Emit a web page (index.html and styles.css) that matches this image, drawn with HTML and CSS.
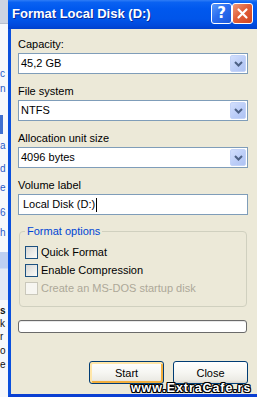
FILE: index.html
```html
<!DOCTYPE html>
<html>
<head>
<meta charset="utf-8">
<title>Format Local Disk (D:)</title>
<link rel="stylesheet" href="styles.css">
</head>
<body>
<div class="screen">
  <div class="backdrop">
    <div class="bd-top"></div>
    <span class="frag blue f1">c</span>
    <span class="frag blue f2">n</span>
    <div class="bd-sel"></div>
    <span class="frag blue f3">a</span>
    <span class="frag blue f4">d</span>
    <span class="frag blue f5">e</span>
    <span class="frag blue f6">6</span>
    <span class="frag blue f7">h</span>
    <div class="bd-band"></div>
    <span class="frag bold f8">s</span>
    <span class="frag f9">k</span>
    <span class="frag f10">r</span>
    <span class="frag f11">o</span>
    <span class="frag f12">e</span>
  </div>

  <div class="window">
    <div class="titlebar">
      <span class="title">Format Local Disk (D:)</span>
      <div class="caption-buttons">
        <div class="cbtn help">?</div>
        <div class="cbtn close">
          <svg width="13" height="13" viewBox="0 0 13 13"><path d="M2.5 2.5 L10.5 10.5 M10.5 2.5 L2.5 10.5" stroke="#fff" stroke-width="2.2" stroke-linecap="round"/></svg>
        </div>
      </div>
    </div>

    <div class="client">
      <div class="field">
        <div class="label">Capacity:</div>
        <div class="combo"><span class="value">45,2 GB</span><span class="drop"><svg width="9" height="6" viewBox="0 0 9 6"><path d="M1 1 L4.5 4.5 L8 1" fill="none" stroke="#4D6185" stroke-width="2"/></svg></span></div>
      </div>
      <div class="field">
        <div class="label">File system</div>
        <div class="combo"><span class="value">NTFS</span><span class="drop"><svg width="9" height="6" viewBox="0 0 9 6"><path d="M1 1 L4.5 4.5 L8 1" fill="none" stroke="#4D6185" stroke-width="2"/></svg></span></div>
      </div>
      <div class="field">
        <div class="label">Allocation unit size</div>
        <div class="combo"><span class="value">4096 bytes</span><span class="drop"><svg width="9" height="6" viewBox="0 0 9 6"><path d="M1 1 L4.5 4.5 L8 1" fill="none" stroke="#4D6185" stroke-width="2"/></svg></span></div>
      </div>
      <div class="field">
        <div class="label">Volume label</div>
        <div class="textbox"><span>Local Disk (D:)</span><span class="caret"></span></div>
      </div>

      <fieldset class="group">
        <legend>Format options</legend>
        <div class="check"><span class="box"></span><span>Quick Format</span></div>
        <div class="check"><span class="box"></span><span>Enable Compression</span></div>
        <div class="check disabled"><span class="box"></span><span>Create an MS-DOS startup disk</span></div>
      </fieldset>

      <div class="progress"></div>

      <div class="actions">
        <button class="btn default">Start</button>
        <button class="btn">Close</button>
      </div>
    </div>
  </div>

  <div class="watermark">www.ExtraCafe.rs</div>
</div>
</body>
</html>
```

FILE: styles.css
```css
* { box-sizing: border-box; }
html, body { margin: 0; padding: 0; }
body {
  width: 257px;
  height: 397px;
  overflow: hidden;
  font-family: "Liberation Sans", Arial, sans-serif;
  font-size: 11px;
  color: #000;
}
.screen {
  position: relative;
  display: flex;
  width: 257px;
  height: 397px;
  overflow: hidden;
  background: #fff;
}

/* background window strip */
.backdrop {
  position: relative;
  flex: none;
  width: 8px;
  background: #F6F8FC;
  overflow: hidden;
}
.bd-top { height: 24px; background: #CDD4E2; border-bottom: 1px solid #B7BFCF; }
.bd-sel { position: absolute; left: 0; top: 115px; width: 3px; height: 19px; background: #3F6FD0; }
.bd-band { position: absolute; left: 0; top: 252px; width: 8px; height: 48px; background: linear-gradient(#BDCFF2 0, #BDCFF2 16px, #E3EAF6 17px, #E3EAF6 100%); }
.frag { position: absolute; left: 0; font-size: 10px; line-height: 12px; white-space: nowrap; color: #111; }
.frag.blue { color: #2A5BC8; }
.frag.bold { font-weight: bold; }
.f1 { top: 68px; }
.f2 { top: 83px; }
.f3 { top: 140px; }
.f4 { top: 163px; }
.f5 { top: 182px; }
.f6 { top: 207px; }
.f7 { top: 227px; }
.f8 { top: 305px; }
.f9 { top: 318px; }
.f10 { top: 331px; }
.f11 { top: 345px; }
.f12 { top: 359px; }

/* dialog window */
.window {
  flex: 1;
  min-width: 0;
  display: flex;
  flex-direction: column;
}
.titlebar {
  flex: none;
  height: 29px;
  display: flex;
  align-items: flex-start;
  padding-left: 4px;
  background: linear-gradient(to bottom, #2F7DF6 0%, #0A62F2 8%, #0058EE 30%, #0055EA 65%, #0049DC 88%, #0040CC 100%);
}
.title {
  flex: 1;
  min-width: 0;
  color: #fff;
  font-weight: bold;
  font-size: 13px;
  line-height: 28px;
  white-space: nowrap;
  text-shadow: 1px 1px 0 #0A2A9A;
}
.caption-buttons {
  display: flex;
  margin-top: 3px;
  margin-right: 4px;
}
.cbtn {
  width: 21px;
  height: 21px;
  border: 1px solid #fff;
  border-radius: 3px;
  display: flex;
  align-items: center;
  justify-content: center;
  color: #fff;
}
.help {
  background: linear-gradient(135deg, #5A9BFB 0%, #2C6EF0 45%, #1A56DB 100%);
  font-family: "DejaVu Sans", sans-serif;
  font-weight: bold;
  font-size: 15px;
  line-height: 19px;
}
.close {
  background: linear-gradient(135deg, #F09A7A 0%, #E2603A 45%, #CF4420 100%);
}

.client {
  flex: 1;
  display: flex;
  flex-direction: column;
  background: #ECE9D8;
  border-left: 3px solid #0A50DE;
  border-bottom: 3px solid #0A3FD2;
  padding: 9px 9px 10px 7px;
}

.field { display: flex; flex-direction: column; }
.field + .field { margin-top: 11px; }
.label { line-height: 13px; margin-bottom: 2px; white-space: nowrap; }

.combo {
  height: 21px;
  display: flex;
  border: 1px solid #7F9DB9;
  background: #fff;
  padding-left: 2px;
}
.combo .value { flex: 1; line-height: 19px; white-space: nowrap; }
.drop {
  width: 16px;
  margin: 1px;
  border: 1px solid #C3D3F8;
  border-radius: 2px;
  background: linear-gradient(135deg, #D2DFFD 0%, #BACCF7 60%, #AFC3F3 100%);
  display: flex;
  align-items: center;
  justify-content: center;
}

.textbox {
  height: 21px;
  display: flex;
  align-items: center;
  border: 1px solid #7F9DB9;
  background: #fff;
  padding-left: 4px;
  line-height: 19px;
  white-space: nowrap;
}
.caret { width: 1px; height: 14px; background: #000; margin-left: 1px; }

.group {
  margin: 10px 1px 0 1px;
  padding: 5px 5px 9px 5px;
  border: 1px solid #D0D0BF;
  border-radius: 4px;
  min-width: 0;
}
.group legend {
  padding: 0 2px;
  color: #0046D5;
  line-height: 13px;
}
.check {
  height: 18px;
  display: flex;
  align-items: center;
  gap: 3px;
  white-space: nowrap;
}
.box {
  flex: none;
  width: 13px;
  height: 13px;
  border: 1px solid #1C5180;
  background: linear-gradient(135deg, #D6D7D6 0%, #EDEDEA 60%, #FAFAF8 100%);
}
.check.disabled { color: #ACA899; }
.check.disabled .box { border-color: #CAC8BB; background: #F7F6F1; }

.progress {
  margin: 13px 1px 0 0;
  height: 13px;
  border: 1px solid #6A6A6A;
  border-radius: 3px;
  background: #fff;
  box-shadow: inset 0 1px 0 #E8E8E8;
}

.actions {
  margin-top: auto;
  display: flex;
  justify-content: flex-end;
  gap: 9px;
}
.btn {
  width: 75px;
  height: 23px;
  padding: 0;
  border: 1px solid #003C74;
  border-radius: 3px;
  background: linear-gradient(to bottom, #FFFFFF 0%, #F6F6F2 50%, #ECEBE5 85%, #D8D2C6 100%);
  font-family: "Liberation Sans", Arial, sans-serif;
  font-size: 11px;
  color: #000;
}
.btn.default {
  box-shadow: inset 1px 1px 0 1px #FFE6A8, inset -1px -1px 0 1px #F2AE3C;
}

.watermark {
  position: absolute;
  left: 131px;
  top: 381px;
  font-family: "Liberation Sans", Arial, sans-serif;
  font-weight: bold;
  font-size: 12.5px;
  line-height: 14px;
  letter-spacing: 0.9px;
  color: #fff;
  white-space: nowrap;
  text-shadow: 1px 0 0 #000, -1px 0 0 #000, 0 1px 0 #000, 0 -1px 0 #000, 1px 1px 0 #000, -1px -1px 0 #000, 1px -1px 0 #000, -1px 1px 0 #000;
}
```
